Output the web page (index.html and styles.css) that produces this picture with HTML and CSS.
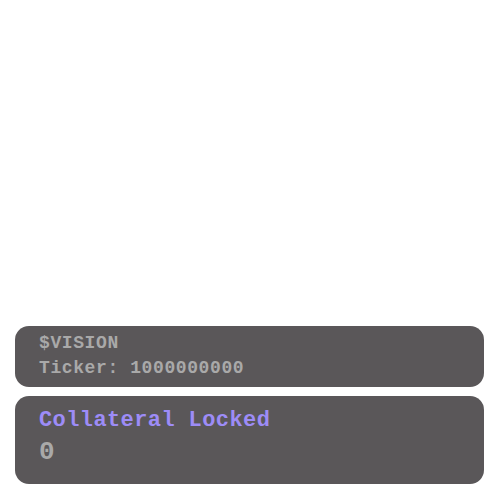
FILE: index.html
```html
<!DOCTYPE html>
<html>
<head>
<meta charset="utf-8">
<link rel="stylesheet" href="styles.css">
</head>
<body>
<div class="page">
  <div class="card info">
    <div class="line">$VISION</div>
    <div class="line">Ticker: 1000000000</div>
  </div>
  <div class="card stat">
    <div class="title">Collateral Locked</div>
    <div class="value">0</div>
  </div>
</div>
</body>
</html>
```
FILE: styles.css
```css
html, body {
  margin: 0;
  padding: 0;
  background: #ffffff;
}
.page {
  box-sizing: border-box;
  width: 500px;
  height: 500px;
  padding: 0 16px 16px 15px;
  display: flex;
  flex-direction: column;
  justify-content: flex-end;
  gap: 9px;
  font-family: "Liberation Mono", "Courier New", monospace;
  font-weight: bold;
}
.card {
  background: #5a5759;
  border-radius: 14px;
  padding: 0 24px;
}
.info {
  height: 61px;
  box-sizing: border-box;
  padding-top: 5px;
}
.line {
  color: #a9a9a9;
  font-size: 18px;
  letter-spacing: 0.6px;
  line-height: 25px;
}
.stat {
  height: 88px;
  box-sizing: border-box;
  padding-top: 11px;
}
.title {
  color: #9d8cf7;
  font-size: 22px;
  letter-spacing: 0.4px;
  line-height: 28px;
}
.value {
  color: #a9a9a9;
  font-size: 26px;
  line-height: 34px;
}
```
